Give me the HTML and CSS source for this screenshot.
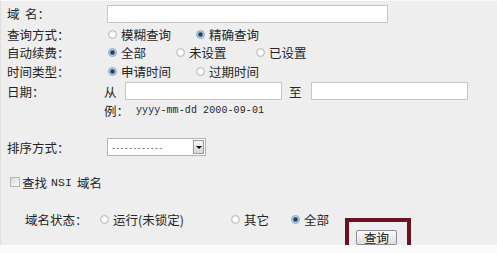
FILE: index.html
```html
<!DOCTYPE html>
<html lang="zh-CN">
<head>
    <meta charset="UTF-8">
    <title>域名查询</title>
    <link rel="stylesheet" href="styles.css">
</head>
<body>
    <form class="page">
        <div class="row row-name">
            <span class="label">域&nbsp;&nbsp;名：</span>
            <input type="text" class="text-input wide">
        </div>
        <div class="row row-mode">
            <span class="label">查询方式：</span>
            <label class="opt w-mode"><input type="radio" name="mode" class="radio">模糊查询</label>
            <label class="opt"><input type="radio" name="mode" class="radio" checked>精确查询</label>
        </div>
        <div class="row">
            <span class="label">自动续费：</span>
            <label class="opt w-all"><input type="radio" name="renew" class="radio" checked>全部</label>
            <label class="opt w-unset"><input type="radio" name="renew" class="radio">未设置</label>
            <label class="opt"><input type="radio" name="renew" class="radio">已设置</label>
        </div>
        <div class="row row-time">
            <span class="label">时间类型：</span>
            <label class="opt w-mode"><input type="radio" name="time" class="radio" checked>申请时间</label>
            <label class="opt"><input type="radio" name="time" class="radio">过期时间</label>
        </div>
        <div class="row row-date">
            <span class="label label-date">日期：</span>
            <span class="from">从</span>
            <input type="text" class="text-input date">
            <span class="to">至</span>
            <input type="text" class="text-input date">
        </div>
        <div class="row">
            <span class="label label-date"></span>
            <span class="example">例：</span>
            <span class="mono">yyyy-mm-dd 2000-09-01</span>
        </div>
        <div class="row row-sort">
            <span class="label">排序方式：</span>
            <div class="select">
                <span class="select-text">------------</span>
                <span class="select-arrow"></span>
            </div>
        </div>
        <div class="row row-nsi">
            <label class="check-opt"><input type="checkbox" class="checkbox">查找 <span class="mono nsi">NSI</span> 域名</label>
        </div>
        <div class="row row-status">
            <span class="label label-status">域名状态：</span>
            <label class="opt w-run"><input type="radio" name="status" class="radio">运行(未锁定)</label>
            <label class="opt w-other"><input type="radio" name="status" class="radio">其它</label>
            <label class="opt"><input type="radio" name="status" class="radio" checked>全部</label>
        </div>
        <div class="row row-submit">
            <span class="highlight">
                <button type="submit" class="submit">查询</button>
            </span>
        </div>
    </form>
</body>
</html>
```

FILE: styles.css
```css
body {
    margin: 0;
    background-color: #fbfbfb;
    font-family: "Noto Sans CJK SC", "Liberation Sans", sans-serif;
    font-size: 12px;
    color: #262626;
}

.page {
    display: flex;
    flex-direction: column;
    margin-top: 1px;
    padding-top: 3px;
    height: 244px;
    box-sizing: border-box;
    background-color: #eeeeee;
    border-left: 1px solid #dedede;
}

.row {
    display: flex;
    align-items: center;
    height: 18px;
    white-space: nowrap;
}

.row-name {
    height: 20px;
}

.row-mode {
    margin-top: 2px;
}

.row-time {
    height: 19px;
}

.row-date {
    height: 21px;
}

.row-sort {
    margin-top: 18px;
    height: 20px;
}

.row-nsi {
    margin-top: 16px;
}

.row-status {
    margin-top: 19px;
}

.row-submit {
    margin-top: 2px;
    height: 15px;
}

.label {
    width: 106px;
    padding-left: 6px;
    box-sizing: border-box;
    flex-shrink: 0;
    font-size: 12.5px;
}

.label-date {
    width: 103px;
}

.label-status {
    width: 98px;
    padding-left: 24px;
}

.text-input {
    height: 18px;
    box-sizing: border-box;
    border: 1px solid #c6c6c6;
    background-color: #fff;
    margin: 0;
    padding: 0 2px;
}

.wide {
    width: 281px;
}

.date {
    width: 157px;
}

.from {
    width: 21px;
    font-size: 12.5px;
}

.to {
    width: 12px;
    margin: 0 10px 0 7px;
    font-size: 12.5px;
}

.example {
    width: 32px;
    font-size: 12.5px;
}

.mono {
    font-family: "Liberation Mono", "DejaVu Sans Mono", monospace;
    font-size: 10px;
    letter-spacing: 0.1px;
}

.opt {
    display: flex;
    align-items: center;
    font-size: 12.5px;
}

.w-mode {
    width: 88px;
}

.w-all {
    width: 68px;
}

.w-unset {
    width: 80px;
}

.w-run {
    width: 131px;
}

.w-other {
    width: 60px;
}

.radio {
    appearance: none;
    width: 9px;
    height: 9px;
    margin: 0 4px 0 1px;
    border-radius: 50%;
    border: 1px solid #b8b8b8;
    background: radial-gradient(circle, #ffffff 30%, #e2e2e2 100%);
    box-sizing: border-box;
}

.radio:checked {
    border-color: #8fa6bf;
    background: radial-gradient(circle, #1f3d66 0 1.6px, #7f9dc0 2.4px, #dbe5ef 3.5px);
}

.select {
    display: flex;
    align-items: center;
    width: 99px;
    height: 18px;
    box-sizing: border-box;
    border: 1px solid #b4b4b4;
    background-color: #fff;
}

.select-text {
    flex: 1;
    padding-left: 3px;
    font-family: "Liberation Mono", monospace;
    font-size: 8px;
    letter-spacing: -0.5px;
    color: #333;
}

.select-arrow {
    width: 11px;
    height: 14px;
    margin-right: 1px;
    box-sizing: border-box;
    border: 1px solid #9a9a9a;
    background: linear-gradient(#f4f4f4, #d8d8d8);
    display: flex;
    align-items: center;
    justify-content: center;
}

.select-arrow::after {
    content: "";
    border-left: 3px solid transparent;
    border-right: 3px solid transparent;
    border-top: 3px solid #000;
}

.check-opt {
    display: flex;
    align-items: center;
    padding-left: 9px;
    font-size: 12.5px;
}

.checkbox {
    appearance: none;
    width: 10px;
    height: 10px;
    margin: 0 2px 0 0;
    border: 1px solid #b5b5b5;
    background: linear-gradient(135deg, #d8d8d8, #fafafa);
    box-sizing: border-box;
}

.nsi {
    margin: 0 5px 0 4px;
    font-size: 11.5px;
}

.highlight {
    position: relative;
    margin-left: 355px;
}

.highlight::before {
    content: "";
    position: absolute;
    left: -11px;
    top: -11px;
    right: -14px;
    bottom: -12px;
    border: 4px solid #6b1121;
}

.submit {
    width: 41px;
    height: 15px;
    padding: 0;
    border: 1px solid #8e8e8e;
    border-radius: 2px;
    background: linear-gradient(#fafafa, #dedede);
    font-family: "Noto Sans CJK SC", sans-serif;
    font-size: 12.5px;
    line-height: 13px;
    color: #222;
}
```
